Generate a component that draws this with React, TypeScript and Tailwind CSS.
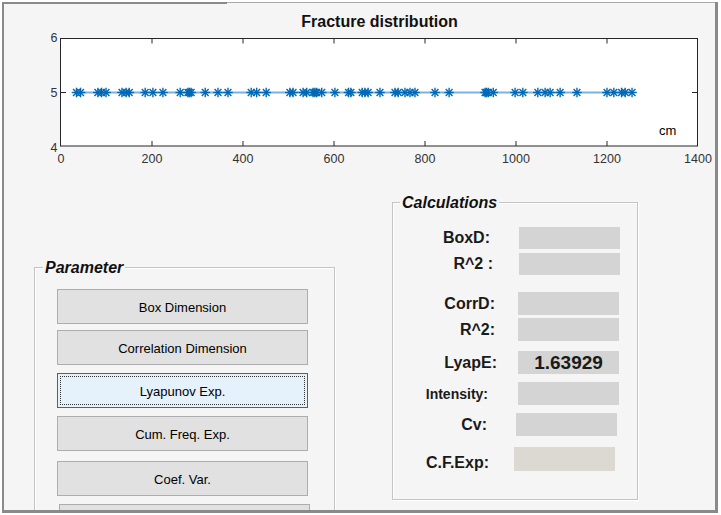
import React from 'react'

// positions of the fractures along the scanline, in cm
const fractures = [
  34, 43, 81, 89, 99, 134, 143, 150, 185, 202, 224, 262, 279, 282, 286, 317, 345, 367,
  418, 430, 451, 503, 510, 532, 540, 554, 558, 562, 573, 602, 632, 637, 662, 668, 675,
  701, 734, 741, 756, 767, 778, 822, 853, 932, 935, 939, 950, 998, 1015, 1048, 1064,
  1075, 1097, 1134, 1200, 1215, 1232, 1240, 1255,
]

const xTicks = [0, 200, 400, 600, 800, 1000, 1200, 1400]

const px = (v: number) => 61 + (v * 637) / 1400

type CalcRow = {
  label: string
  value?: string
  row: string
  lw: string
  bl: string
  fs: string
  box: string
  lab?: string
}

const calcRows: CalcRow[] = [
  { label: 'BoxD:', row: 'mt-[24px] h-[22px]', lw: 'w-[97px]', bl: 'ml-[29px]', fs: 'text-[16px]', box: 'bg-[#d4d4d4]' },
  { label: 'R^2 :', row: 'mt-[4px] h-[22px]', lw: 'w-[100px]', bl: 'ml-[26px]', fs: 'text-[16px]', box: 'bg-[#d4d4d4]' },
  { label: 'CorrD:', row: 'mt-[17px] h-[23px]', lw: 'w-[102px]', bl: 'ml-[23px]', fs: 'text-[16px]', box: 'bg-[#d4d4d4]' },
  { label: 'R^2:', row: 'mt-[3px] h-[23px]', lw: 'w-[102px]', bl: 'ml-[23px]', fs: 'text-[16px]', box: 'bg-[#d4d4d4]' },
  { label: 'LyapE:', value: '1.63929', row: 'mt-[10px] h-[23px]', lw: 'w-[104px]', bl: 'ml-[21px]', fs: 'text-[16px]', box: 'bg-[#d4d4d4]' },
  { label: 'Intensity:', row: 'mt-[8px] h-[23px]', lw: 'w-[95px]', bl: 'ml-[30px]', fs: 'text-[14px]', box: 'bg-[#d4d4d4]' },
  { label: 'Cv:', row: 'mt-[8px] h-[23px]', lw: 'w-[94px]', bl: 'ml-[29px]', fs: 'text-[16px]', box: 'bg-[#d4d4d4]' },
  { label: 'C.F.Exp:', row: 'mt-[11px] h-[24px]', lw: 'w-[96px]', bl: 'ml-[25px]', fs: 'text-[16px]', box: 'bg-[#dcd9d3]', lab: 'mt-[8px]' },
]

function Star({ x }: { x: number }) {
  const y = 92.5
  return (
    <g>
      <line x1={x - 4.8} y1={y} x2={x + 4.8} y2={y} />
      <line x1={x} y1={y - 4.8} x2={x} y2={y + 4.8} />
      <line x1={x - 3.4} y1={y - 3.4} x2={x + 3.4} y2={y + 3.4} />
      <line x1={x - 3.4} y1={y + 3.4} x2={x + 3.4} y2={y - 3.4} />
    </g>
  )
}

function Chart() {
  const first = px(fractures[0])
  const last = px(fractures[fractures.length - 1])
  return (
    <svg width={711} height={140} viewBox="4 30 711 140" className="block shrink-0">
      <rect x={60.5} y={38.5} width={637} height={107.5} fill="#fff" stroke="#262626" strokeWidth={1} />
      <g stroke="#262626" strokeWidth={1}>
        {xTicks.slice(1, -1).map(t => (
          <g key={t}>
            <line x1={px(t)} y1={38.5} x2={px(t)} y2={43.5} />
            <line x1={px(t)} y1={146} x2={px(t)} y2={141} />
          </g>
        ))}
        <line x1={61} y1={92.5} x2={66} y2={92.5} />
        <line x1={697} y1={92.5} x2={692} y2={92.5} />
      </g>
      <g fill="#333" fontSize={12.5}>
        {xTicks.map(t => (
          <text key={t} x={px(t)} y={162.5} textAnchor="middle">{t}</text>
        ))}
        <text x={57.5} y={42} textAnchor="end">6</text>
        <text x={57.5} y={97} textAnchor="end">5</text>
        <text x={57.5} y={151.5} textAnchor="end">4</text>
      </g>
      <text x={659} y={135} fontSize={13} fill="#000">cm</text>
      <line x1={first} y1={92.5} x2={last} y2={92.5} stroke="#7cb1e2" strokeWidth={2.2} />
      <g stroke="#0068b5" strokeWidth={1.4}>
        {fractures.map((v, i) => <Star key={i} x={px(v)} />)}
      </g>
    </svg>
  )
}

function Btn({ label, cls, focused }: { label: string; cls: string; focused?: boolean }) {
  return (
    <div
      className={
        'relative h-[35px] w-[251px] flex items-center justify-center pt-[2px] text-[13px] text-black border ' +
        (focused ? 'bg-[#e5f1fb] border-[#0078d7] ' : 'bg-[#e1e1e1] border-[#adadad] ') +
        cls
      }
    >
      {label}
      {focused && <span className="absolute inset-[2px] border border-dotted border-[#333]" />}
    </div>
  )
}

export default function App() {
  return (
    <div className="w-[721px] h-[515px] bg-white overflow-hidden pt-[2px] pl-[2px] font-['Liberation_Sans',Arial,sans-serif]">
      <div className="w-[716px] h-[511px] bg-[#f5f5f5] border-l-2 border-r-[3px] border-b-[3px] border-[#8a8a8a] overflow-hidden flex flex-col">
        <div className="flex h-[2px] shrink-0">
          <div className="w-[223px] bg-[#8a8a8a]" />
          <div className="flex-1 border-t border-[#a8a8a8]" />
        </div>

        <div className="ml-[57px] w-[637px] pt-[9px] text-center text-[16px] leading-[17px] font-bold text-[#111] shrink-0">
          Fracture distribution
        </div>

        <Chart />

        <div className="flex items-start">
          {/* Parameter group */}
          <div className="relative ml-[30px] mt-[97px] w-[301px] h-[260px] shrink-0 border border-[#c4c4c4] shadow-[inset_1px_1px_0_#fff,1px_1px_0_#fff] pt-[21px]">
            <span className="absolute left-[8px] top-[-10px] px-[2px] bg-[#f5f5f5] text-[16px] leading-[20px] font-bold italic text-[#111]">
              Parameter
            </span>
            <Btn label="Box Dimension" cls="ml-[22px]" />
            <Btn label="Correlation Dimension" cls="ml-[22px] mt-[6px]" />
            <Btn label="Lyapunov Exp." cls="ml-[22px] mt-[8px]" focused />
            <Btn label="Cum. Freq. Exp." cls="ml-[22px] mt-[8px]" />
            <Btn label="Coef. Var." cls="ml-[22px] mt-[10px]" />
            <Btn label="" cls="ml-[24px] mt-[8px]" />
          </div>

          {/* Calculations group */}
          <div className="relative ml-[57px] mt-[32px] w-[246px] h-[298px] shrink-0 border border-[#c4c4c4] shadow-[inset_1px_1px_0_#fff,1px_1px_0_#fff]">
            <span className="absolute left-[7px] top-[-10px] px-[2px] bg-[#f5f5f5] text-[16px] leading-[20px] font-bold italic text-[#111]">
              Calculations
            </span>
            {calcRows.map(r => (
              <div key={r.label} className={'flex items-center ' + r.row}>
                <div className={'text-right font-bold leading-[18px] text-[#1a1a1a] shrink-0 ' + r.lw + ' ' + r.fs + ' ' + (r.lab ?? '')}>
                  {r.label}
                </div>
                <div className={'h-full w-[101px] flex items-center justify-center shrink-0 ' + r.bl + ' ' + r.box}>
                  {r.value && <span className="text-[19px] leading-[20px] font-bold text-[#1a1a1a]">{r.value}</span>}
                </div>
              </div>
            ))}
          </div>
        </div>
      </div>
    </div>
  )
}
